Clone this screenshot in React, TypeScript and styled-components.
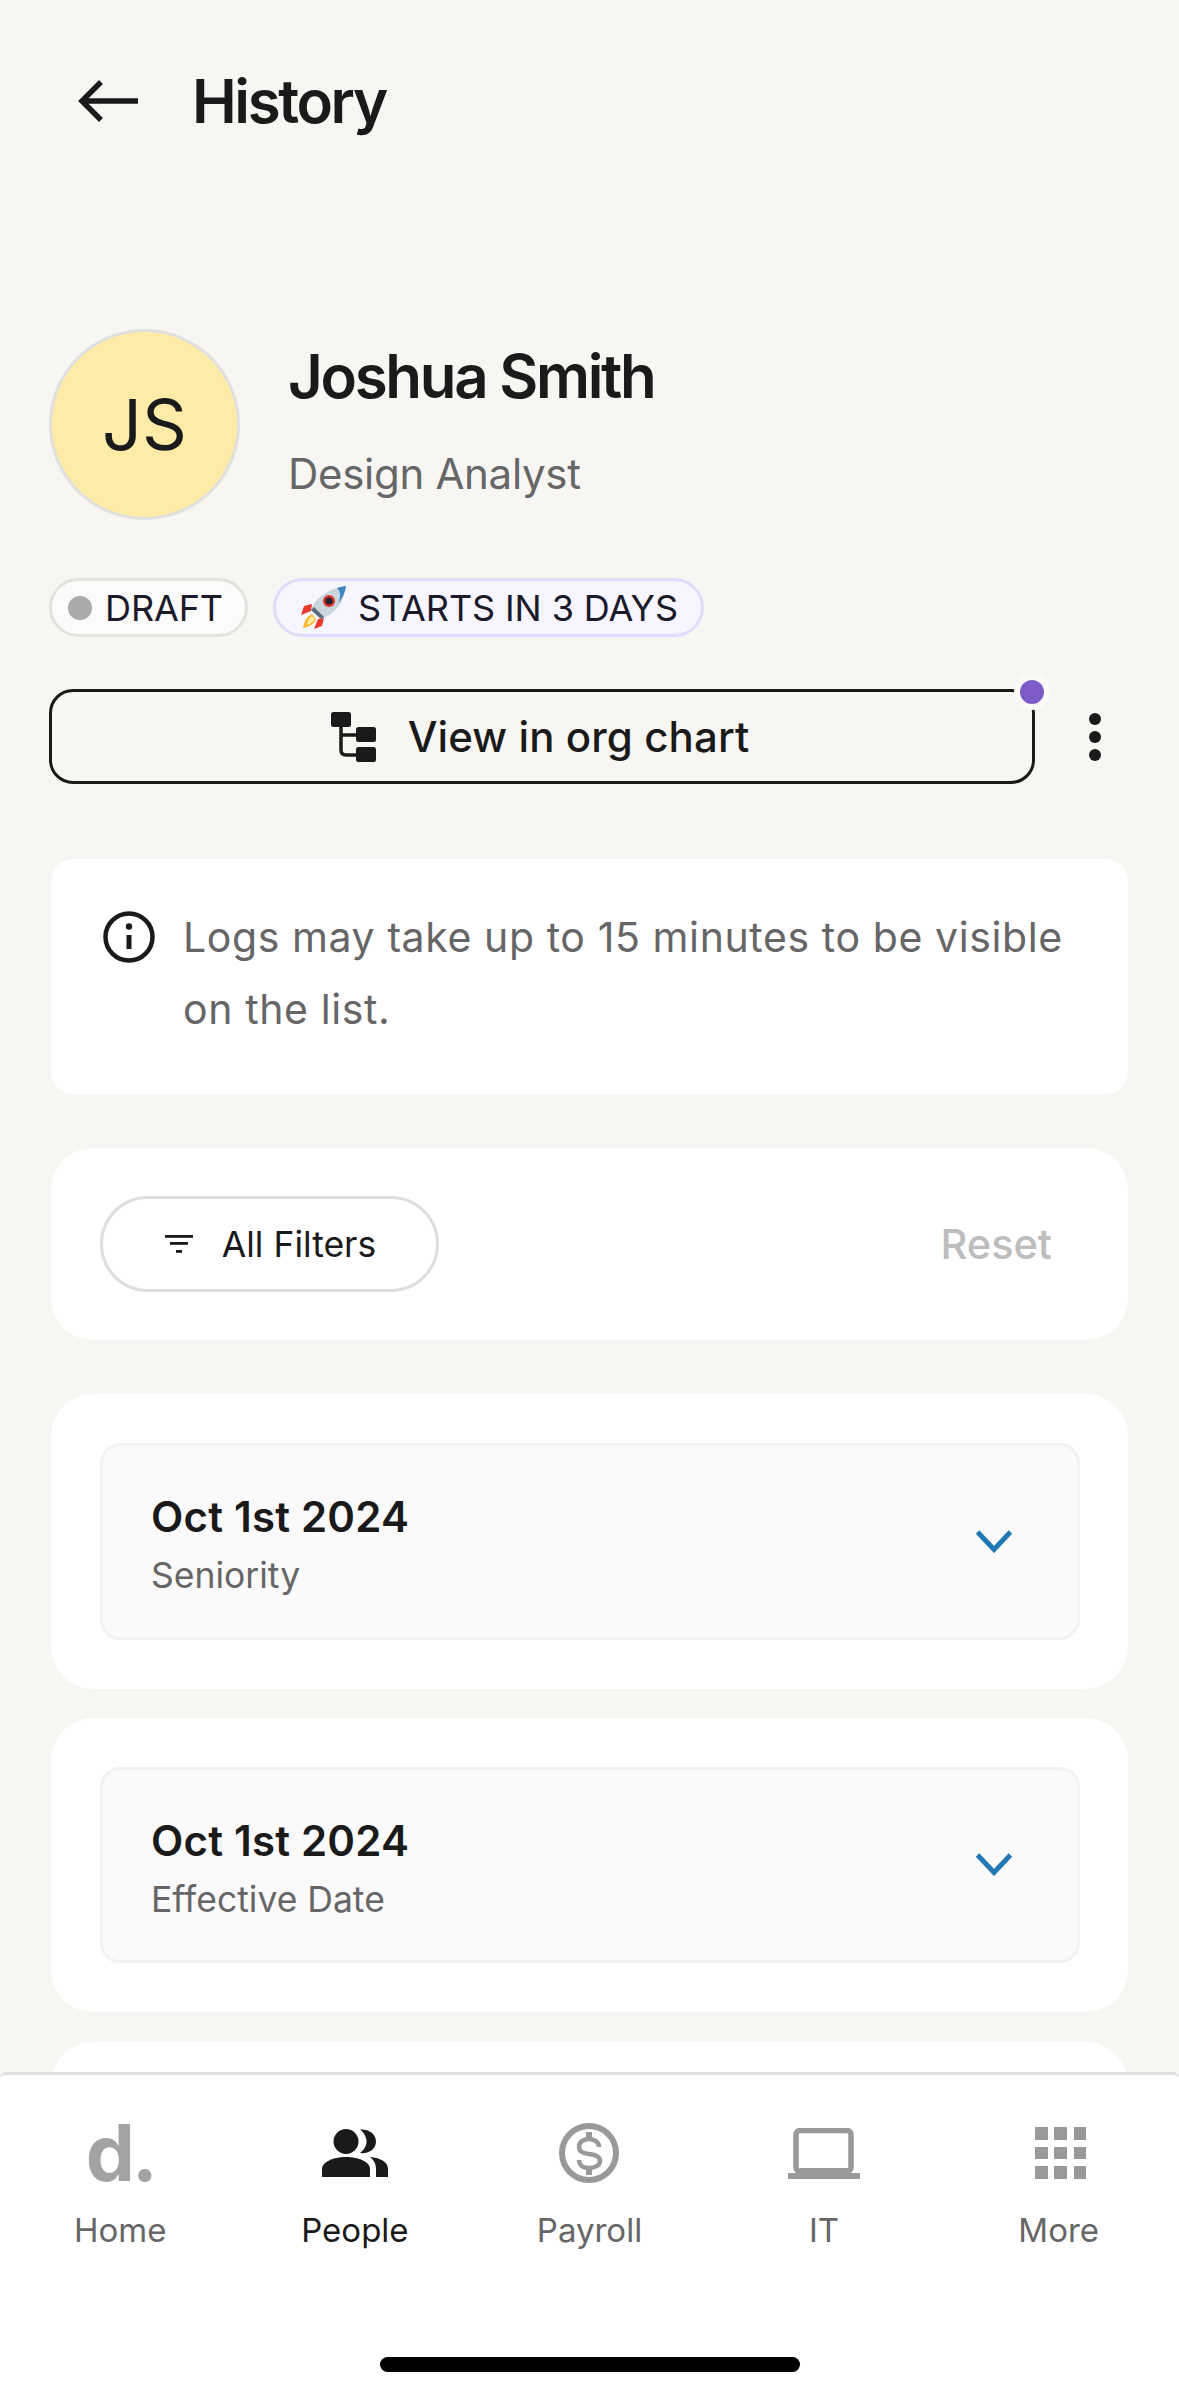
import React from "react";
import styled, { createGlobalStyle } from "styled-components";

const Global = createGlobalStyle`
  html, body { margin: 0; padding: 0; background: #f7f6f3; }
  * { box-sizing: border-box; }
  body { font-family: Inter, "Noto Sans", sans-serif; color: #1a1a1a; }
`;

const Screen = styled.div`
  width: 1179px;
  height: 2396px;
  display: flex;
  flex-direction: column;
  overflow: hidden;
  background: #f7f6f3;
`;
const Scroll = styled.main`
  flex: 1;
  min-height: 0;
  overflow: hidden;
`;
const Header = styled.header`
  height: 202px;
  display: flex;
  align-items: center;
  padding-left: 78px;
  gap: 53px;
`;
const Title = styled.h1`
  margin: 0;
  font-size: 60px;
  line-height: 70px;
  font-weight: 600;
  letter-spacing: -2.4px;
`;
const Profile = styled.section`
  margin-top: 127px;
  padding-left: 49px;
  display: flex;
  gap: 48px;
`;
const Avatar = styled.div`
  width: 191px;
  height: 191px;
  border-radius: 50%;
  border: 3px solid #e0e0dc;
  background: #ffeba8;
  display: flex;
  align-items: center;
  justify-content: center;
  font-size: 70px;
  font-weight: 400;
`;
const Who = styled.div`
  display: flex;
  flex-direction: column;
  padding-top: 12px;
`;
const Name = styled.div`
  font-size: 60px;
  line-height: 70px;
  font-weight: 600;
  letter-spacing: -2.3px;
`;
const Role = styled.div`
  margin-top: 37px;
  font-size: 42px;
  line-height: 52px;
  color: #666;
  letter-spacing: -0.3px;
`;
const Chips = styled.div`
  margin-top: 58px;
  padding-left: 49px;
  display: flex;
  gap: 25px;
`;
const Chip = styled.div<{ $bg: string; $line: string }>`
  height: 59px;
  border-radius: 30px;
  border: 3px solid ${(p) => p.$line};
  background: ${(p) => p.$bg};
  display: flex;
  align-items: center;
  font-size: 36px;
  letter-spacing: -0.1px;
  color: #1a1a2a;
`;
const DraftChip = styled(Chip)`
  width: 199px;
  padding: 0 0 0 16px;
  gap: 13px;
`;
const StartChip = styled(Chip)`
  width: 431px;
  padding: 0 0 0 25px;
  gap: 12px;
`;
const Dot = styled.span`
  width: 24px;
  height: 24px;
  border-radius: 50%;
  background: #aaa;
`;
const Actions = styled.div`
  margin-top: 52px;
  padding-left: 49px;
  display: flex;
  align-items: center;
`;
const OrgButton = styled.div`
  position: relative;
  width: 986px;
  height: 95px;
  border: 3px solid #1a1a1a;
  border-radius: 24px;
  display: flex;
  align-items: center;
  justify-content: center;
  gap: 32px;
  font-size: 42px;
  font-weight: 500;
  letter-spacing: 0.1px;
  padding-right: 4px;
`;
const Notice = styled.span`
  position: absolute;
  right: -18px;
  top: -18px;
  width: 36px;
  height: 36px;
  border-radius: 50%;
  border: 6px solid #fbfaf8;
  background: #7e5cc8;
`;
const Kebab = styled.div`
  margin-left: 54px;
  display: flex;
  flex-direction: column;
  gap: 6px;
`;
const KebabDot = styled.span`
  width: 12px;
  height: 12px;
  border-radius: 50%;
  background: #1a1a1a;
`;
const Stack = styled.div`
  margin: 75px 51px 0;
  width: 1077px;
`;
const InfoCard = styled.section`
  height: 235px;
  background: #fff;
  border-radius: 22px;
  padding: 42px 40px 0 52px;
  display: flex;
  gap: 28px;
`;
const InfoText = styled.p`
  margin: 0;
  font-size: 41px;
  line-height: 72px;
  color: #666;
  letter-spacing: 0.6px;
`;
const IconSlot = styled.div`
  padding-top: 10px;
  line-height: 0;
`;
const Card = styled.section<{ $gap: number }>`
  margin-top: ${(p) => p.$gap}px;
  background: #fff;
  border-radius: 42px;
  padding: 49px 49px;
`;
const FilterCard = styled(Card)`
  height: 192px;
  padding: 48px 49px;
  display: flex;
  align-items: center;
  justify-content: space-between;
`;
const FilterPill = styled.div`
  width: 339px;
  height: 96px;
  border: 3px solid #dedede;
  border-radius: 48px;
  display: flex;
  align-items: center;
  justify-content: center;
  gap: 29px;
  font-size: 35.5px;
  padding-left: 2px;
`;
const Reset = styled.div`
  font-size: 41.5px;
  font-weight: 500;
  color: #bdbdbd;
  margin-right: 27px;
`;
const LogRow = styled.div`
  height: 196.5px;
  background: #fafafa;
  border: 3px solid #f2f2f2;
  border-radius: 20px;
  padding: 0 65px 0 48px;
  margin-right: -1px;
  display: flex;
  align-items: center;
  justify-content: space-between;
`;
const LogText = styled.div`
  display: flex;
  flex-direction: column;
  padding-top: 7px;
`;
const LogDate = styled.div`
  font-size: 42px;
  line-height: 54px;
  font-weight: 600;
  letter-spacing: 0.2px;
`;
const LogKind = styled.div`
  margin-top: 9px;
  font-size: 35.5px;
  line-height: 46px;
  color: #666;
`;
const Nav = styled.nav`
  height: 324px;
  flex: none;
  background: #fff;
  border-top: 3px solid #dfdfdf;
  border-radius: 6px 6px 0 0;
  display: flex;
  flex-direction: column;
`;
const Tabs = styled.div`
  height: 224px;
  padding: 48px 3px 0;
  display: grid;
  grid-template-columns: repeat(5, 1fr);
`;
const Tab = styled.div<{ $on?: boolean }>`
  display: flex;
  flex-direction: column;
  align-items: center;
  color: ${(p) => (p.$on ? "#1a1a1a" : "#666")};
  font-size: 33px;
`;
const TabIcon = styled.div`
  height: 60px;
  display: flex;
  align-items: center;
  justify-content: center;
`;
const TabLabel = styled.div`
  line-height: 40px;
  margin-top: 27px;
`;
const Logo = styled.div`
  height: 60px;
  font-size: 78px;
  line-height: 60px;
  font-weight: 700;
  letter-spacing: -3px;
  color: #a3a3a3;
`;
const Dots = styled.div`
  display: grid;
  grid-template-columns: repeat(3, 12.6px);
  grid-auto-rows: 12.6px;
  gap: 6.7px;
  margin-left: 4px;
`;
const Square = styled.span`
  background: #999;
`;
const HomeBar = styled.div`
  width: 420px;
  height: 15px;
  border-radius: 8px;
  background: #000;
  margin: 58px auto 0;
`;

const BackIcon = () => (
  <svg width="61" height="42" viewBox="0 0 61 42" fill="none" stroke="#1a1a1a" strokeWidth="5.5">
    <path d="M60 21H4" />
    <path d="M23 2L4 21L23 40" />
  </svg>
);
const OrgIcon = () => (
  <svg width="45" height="50" viewBox="0 0 45 50" fill="#1a1a1a">
    <rect width="20" height="15" rx="2.5" />
    <rect x="25" y="15" width="20" height="15" rx="2.5" />
    <rect x="25" y="35" width="20" height="15" rx="2.5" />
    <path d="M10 14V38Q10 43 15 43H26M10 23H26" fill="none" stroke="#1a1a1a" strokeWidth="3.5" />
  </svg>
);
const Rocket = () => (
  <svg width="45" height="43" viewBox="0 0 45 43">
    <path d="M11 18L3 20L0 29L10 25Z" fill="#e8392a" />
    <path d="M23 32L21 40L13 43L17 33Z" fill="#e8392a" />
    <path d="M11 28C6 30 3 36 2 42C8 41 13 38 15 33Z" fill="#fbb62c" />
    <path d="M11 30C8 32 6 36 6 39C9 38 12 36 14 33Z" fill="#fff0a0" />
    <path d="M10 24C14 12 26 3 45 0C43 17 34 28 20 33Z" fill="#c9d6de" />
    <path d="M36 2C39 1 42 0.5 45 0C44 7 41 13 37 18C40 12 40 6 36 2Z" fill="#3d87c4" />
    <path d="M10 24L20 33L23 31L13 21Z" fill="#5a6a78" />
    <circle cx="28" cy="15" r="6" fill="#d9332c" />
    <circle cx="28" cy="15" r="3.6" fill="#1d2530" />
  </svg>
);
const InfoIcon = () => (
  <svg width="52" height="52" viewBox="0 0 52 52" fill="none">
    <circle cx="26" cy="26" r="23.5" stroke="#1a1a1a" strokeWidth="4.5" />
    <path d="M26 24V38" stroke="#1a1a1a" strokeWidth="5" />
    <circle cx="26" cy="15.5" r="3.2" fill="#1a1a1a" />
  </svg>
);
const FilterIcon = () => (
  <svg width="28" height="18" viewBox="0 0 28 18" fill="#1a1a1a">
    <rect width="28" height="2.8" />
    <rect x="5" y="7" width="18" height="2.8" />
    <rect x="11" y="15" width="6" height="2.8" />
  </svg>
);
const Chevron = () => (
  <svg width="36" height="23" viewBox="0 0 36 23" fill="none" stroke="#2278b5" strokeWidth="5">
    <path d="M1.5 2L18 19.5L34.5 2" />
  </svg>
);
const PeopleIcon = () => (
  <svg width="66" height="48" viewBox="0 0 66 48" fill="currentColor">
    <circle cx="24" cy="12.5" r="12.5" />
    <path d="M0 48V40C0 33 11 28 24 28C37 28 48 33 48 40V48Z" />
    <path d="M38 .5C47 0 54 5 54 12.5C54 20 47 25 38 24C42 21 44.500 17 44.500 12.500C44.500 8 42 3.500 38 .5Z" />
    <path d="M48 28C59 29 66 33 66 40V48H54V40C54 35 52 31 48 28Z" />
  </svg>
);
const PayrollIcon = () => (
  <svg width="60" height="60" viewBox="0 0 60 60" fill="none" stroke="#999">
    <circle cx="30" cy="30" r="27" strokeWidth="6" />
    <path d="M40 24C40 19 35 16 30 16C24 16 20 19.500 20 24C20 29 25 30.500 30 31C35 31.500 41 33 41 38C41 42.500 36 45 30 45C24 45 20 42 20 37" strokeWidth="4.500" />
    <path d="M30 9V16M30 45V52" strokeWidth="6" />
  </svg>
);
const LaptopIcon = () => (
  <svg width="72" height="51" viewBox="0 0 72 51" fill="none">
    <rect x="8" y="2.500" width="55" height="41" rx="4" stroke="#999" strokeWidth="5.500" />
    <path d="M12 40H60L62 45H72V51H0V45H10Z" fill="#999" />
  </svg>
);

const logs = [
  { date: "Oct 1st 2024", kind: "Seniority", gap: 54 },
  { date: "Oct 1st 2024", kind: "Effective Date", gap: 29 },
];

export default function App() {
  return (
    <Screen>
      <Global />
      <Scroll>
        <Header>
          <BackIcon />
          <Title>History</Title>
        </Header>
        <Profile>
          <Avatar>JS</Avatar>
          <Who>
            <Name>Joshua Smith</Name>
            <Role>Design Analyst</Role>
          </Who>
        </Profile>
        <Chips>
          <DraftChip $bg="#fbfbfa" $line="#e2e2e0">
            <Dot />
            DRAFT
          </DraftChip>
          <StartChip $bg="#f7f5ff" $line="#e0dcf9">
            <Rocket />
            STARTS IN 3 DAYS
          </StartChip>
        </Chips>
        <Actions>
          <OrgButton>
            <OrgIcon />
            View in org chart
            <Notice />
          </OrgButton>
          <Kebab>
            <KebabDot />
            <KebabDot />
            <KebabDot />
          </Kebab>
        </Actions>
        <Stack>
          <InfoCard>
            <IconSlot>
              <InfoIcon />
            </IconSlot>
            <InfoText>Logs may take up to 15 minutes to be visible on the list.</InfoText>
          </InfoCard>
          <FilterCard $gap={54}>
            <FilterPill>
              <FilterIcon />
              All Filters
            </FilterPill>
            <Reset>Reset</Reset>
          </FilterCard>
          {logs.map((l) => (
            <Card key={l.kind} $gap={l.gap}>
              <LogRow>
                <LogText>
                  <LogDate>{l.date}</LogDate>
                  <LogKind>{l.kind}</LogKind>
                </LogText>
                <Chevron />
              </LogRow>
            </Card>
          ))}
          <Card $gap={30} />
        </Stack>
      </Scroll>
      <Nav>
        <Tabs>
          <Tab>
            <Logo>d.</Logo>
            <TabLabel>Home</TabLabel>
          </Tab>
          <Tab $on>
            <TabIcon>
              <PeopleIcon />
            </TabIcon>
            <TabLabel>People</TabLabel>
          </Tab>
          <Tab>
            <TabIcon>
              <PayrollIcon />
            </TabIcon>
            <TabLabel>Payroll</TabLabel>
          </Tab>
          <Tab>
            <TabIcon>
              <LaptopIcon />
            </TabIcon>
            <TabLabel>IT</TabLabel>
          </Tab>
          <Tab>
            <TabIcon>
              <Dots>
                {Array.from({ length: 9 }, (_, i) => (
                  <Square key={i} />
                ))}
              </Dots>
            </TabIcon>
            <TabLabel>More</TabLabel>
          </Tab>
        </Tabs>
        <HomeBar />
      </Nav>
    </Screen>
  );
}
